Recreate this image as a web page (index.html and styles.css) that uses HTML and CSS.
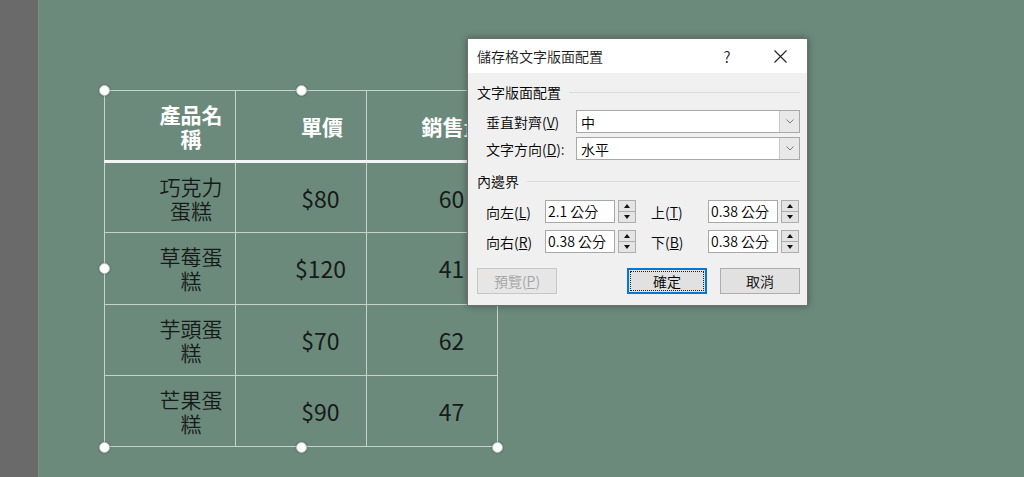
FILE: index.html
```html
<!DOCTYPE html>
<html lang="zh-Hant">
<head>
    <meta charset="UTF-8">
    <title>儲存格文字版面配置</title>
    <link rel="stylesheet" href="styles.css">
</head>
<body>
    <div class="sidebar"></div>

    <div class="slide">
        <!-- selected table on the slide -->
        <div class="table-frame">
            <table class="price-table">
                <thead>
                    <tr>
                        <th>產品名稱</th>
                        <th>單價</th>
                        <th>銷售量</th>
                    </tr>
                </thead>
                <tbody>
                    <tr>
                        <td>巧克力蛋糕</td>
                        <td class="num">$80</td>
                        <td class="num">60</td>
                    </tr>
                    <tr>
                        <td>草莓蛋糕</td>
                        <td class="num">$120</td>
                        <td class="num">41</td>
                    </tr>
                    <tr>
                        <td>芋頭蛋糕</td>
                        <td class="num">$70</td>
                        <td class="num">62</td>
                    </tr>
                    <tr>
                        <td>芒果蛋糕</td>
                        <td class="num">$90</td>
                        <td class="num">47</td>
                    </tr>
                </tbody>
            </table>
            <span class="handle h-tl"></span>
            <span class="handle h-tm"></span>
            <span class="handle h-tr"></span>
            <span class="handle h-ml"></span>
            <span class="handle h-mr"></span>
            <span class="handle h-bl"></span>
            <span class="handle h-bm"></span>
            <span class="handle h-br"></span>
        </div>

        <!-- dialog: cell text layout -->
        <div class="dialog">
            <div class="dialog-title">
                <span class="title-text">儲存格文字版面配置</span>
                <span class="title-btn">?</span>
                <span class="title-btn">
                    <svg width="13" height="13" viewBox="0 0 13 13">
                        <path d="M0.5 0.5 L12.5 12.5 M12.5 0.5 L0.5 12.5" stroke="#222" stroke-width="1.1" fill="none"/>
                    </svg>
                </span>
            </div>

            <div class="dialog-body">
                <div class="group-title"><span>文字版面配置</span></div>
                <div class="field-row">
                    <label>垂直對齊(<u>V</u>)</label>
                    <div class="combo">
                        <span class="combo-value">中</span>
                        <span class="combo-btn">
                            <svg width="8" height="5" viewBox="0 0 8 5"><path d="M0.5 0.5 L4 4 L7.5 0.5" stroke="#7a7a7a" fill="none"/></svg>
                        </span>
                    </div>
                </div>
                <div class="field-row">
                    <label>文字方向(<u>D</u>):</label>
                    <div class="combo">
                        <span class="combo-value">水平</span>
                        <span class="combo-btn">
                            <svg width="8" height="5" viewBox="0 0 8 5"><path d="M0.5 0.5 L4 4 L7.5 0.5" stroke="#7a7a7a" fill="none"/></svg>
                        </span>
                    </div>
                </div>

                <div class="group-title second"><span>內邊界</span></div>
                <div class="spin-row">
                    <label class="spin-label">向左(<u>L</u>)</label>
                    <div class="spin-input">2.1 公分</div>
                    <div class="spinner"><span class="up"></span><span class="down"></span></div>
                    <label class="spin-label right">上(<u>T</u>)</label>
                    <div class="spin-input">0.38 公分</div>
                    <div class="spinner"><span class="up"></span><span class="down"></span></div>
                </div>
                <div class="spin-row">
                    <label class="spin-label">向右(<u>R</u>)</label>
                    <div class="spin-input">0.38 公分</div>
                    <div class="spinner"><span class="up"></span><span class="down"></span></div>
                    <label class="spin-label right">下(<u>B</u>)</label>
                    <div class="spin-input">0.38 公分</div>
                    <div class="spinner"><span class="up"></span><span class="down"></span></div>
                </div>

                <div class="button-row">
                    <button class="btn disabled">預覽(<u>P</u>)</button>
                    <button class="btn primary">確定</button>
                    <button class="btn">取消</button>
                </div>
            </div>
        </div>
    </div>
</body>
</html>
```

FILE: styles.css
```css
body {
    margin: 0;
    height: 477px;
    display: flex;
    overflow: hidden;
    font-family: "Noto Sans CJK TC", "Noto Sans", sans-serif;
}
.sidebar {
    width: 38px;
    background-color: #6a6a6a;
    border-right: 1px solid #7d8e86;
}
.slide {
    flex: 1;
    position: relative;
    background-color: #6b8a7c;
    padding: 90px 0 0 65px;
}

/* table */
.table-frame {
    position: relative;
    width: 393px;
    height: 357px;
}
.price-table {
    width: 393px;
    height: 357px;
    border-collapse: collapse;
    table-layout: fixed;
}
.price-table th,
.price-table td {
    width: 131px;
    border: 1px solid #c5d3cc;
    padding: 0 10px 0 52px;
    font-size: 21px;
    line-height: 24px;
    text-align: center;
    vertical-align: middle;
    box-sizing: border-box;
}
.price-table th {
    height: 71px;
    color: #fff;
    font-weight: bold;
    border-bottom: 3px solid #f2f5f3;
}
.price-table td {
    height: 71px;
    color: #161a18;
    font-weight: 350;
}
.price-table td.num {
    font-size: 23px;
    font-weight: 400;
    padding-left: 49px;
}
.handle {
    position: absolute;
    width: 9px;
    height: 9px;
    margin: -5px 0 0 -5px;
    border-radius: 50%;
    background: #fff;
    border: 1px solid #b9c2be;
    box-shadow: 0 0 2px rgba(0, 0, 0, 0.35);
}
.h-tl { left: 0; top: 0; }
.h-tm { left: 197px; top: 0; }
.h-tr { left: 393px; top: 0; }
.h-ml { left: 0; top: 178px; }
.h-mr { left: 393px; top: 178px; }
.h-bl { left: 0; top: 357px; }
.h-bm { left: 197px; top: 357px; }
.h-br { left: 393px; top: 357px; }

/* dialog */
.dialog {
    position: absolute;
    left: 428px;
    top: 38px;
    width: 341px;
    height: 268px;
    box-sizing: border-box;
    background: #f0f0f0;
    border: 1px solid #6f6f6f;
    box-shadow: 0 0 7px rgba(0, 0, 0, 0.35);
    font-size: 14px;
    font-weight: 350;
    color: #000;
}
.dialog-title {
    height: 34px;
    background: #fff;
    display: flex;
    align-items: center;
    padding: 0 4px 0 9px;
}
.title-text {
    flex: 1;
    font-size: 14px;
    color: #1a1a1a;
}
.title-btn {
    width: 46px;
    text-align: center;
    font-size: 15px;
    color: #222;
    display: flex;
    justify-content: center;
}
.title-btn + .title-btn {
    margin-left: 7px;
}
.dialog-body {
    padding: 9px 7px 0 9px;
}
.group-title {
    height: 20px;
    display: flex;
    align-items: center;
    line-height: 20px;
}
.group-title::after {
    content: "";
    flex: 1;
    border-top: 1px solid #dadada;
    margin-left: 8px;
}
.group-title.second {
    margin-top: 11px;
    margin-bottom: 9px;
}
.field-row {
    display: flex;
    align-items: center;
    height: 23px;
    margin-top: 4px;
    padding-left: 9px;
}
.group-title + .field-row {
    margin-top: 8px;
}
.field-row label {
    width: 90px;
}
.combo {
    flex: 1;
    height: 23px;
    box-sizing: border-box;
    border: 1px solid #a8a8a8;
    background: #fff;
    display: flex;
    align-items: center;
}
.combo-value {
    flex: 1;
    padding-left: 4px;
}
.combo-btn {
    width: 19px;
    height: 21px;
    background: #e8e8e8;
    border-left: 1px solid #c8c8c8;
    display: flex;
    align-items: center;
    justify-content: center;
}
.spin-row {
    display: flex;
    align-items: center;
    height: 23px;
    padding-left: 9px;
}
.spin-row + .spin-row {
    margin-top: 7px;
}
.spin-label {
    width: 59px;
}
.spin-label.right {
    width: 57px;
    margin-left: 15px;
}
.spin-input {
    width: 70px;
    height: 23px;
    box-sizing: border-box;
    border: 1px solid #a8a8a8;
    background: #fff;
    padding-left: 2px;
    line-height: 20px;
}
.spinner {
    width: 18px;
    height: 23px;
    margin-left: 3px;
    box-sizing: border-box;
    border: 1px solid #adadad;
    background: #e4e4e4;
    display: flex;
    flex-direction: column;
}
.spinner span {
    flex: 1;
    display: flex;
    align-items: center;
    justify-content: center;
}
.spinner .up {
    border-bottom: 1px solid #adadad;
}
.spinner .up::before {
    content: "";
    border: 3px solid transparent;
    border-bottom: 4px solid #111;
    border-top: 0;
}
.spinner .down::before {
    content: "";
    border: 3px solid transparent;
    border-top: 4px solid #111;
    border-bottom: 0;
}
.button-row {
    display: flex;
    margin-top: 15px;
}
.btn {
    width: 80px;
    height: 26px;
    font-family: inherit;
    font-size: 14px;
    font-weight: 350;
    background: #e1e1e1;
    border: 1px solid #adadad;
    color: #000;
    padding: 0;
}
.btn.disabled {
    color: #a3a3a3;
    background: #e6e6e6;
    border-color: #c6c6c6;
}
.btn.primary {
    margin-left: auto;
    border: 2px solid #0078d7;
    outline: 1px dotted #222;
    outline-offset: -4px;
}
.btn + .btn:last-child {
    margin-left: 13px;
}
```
